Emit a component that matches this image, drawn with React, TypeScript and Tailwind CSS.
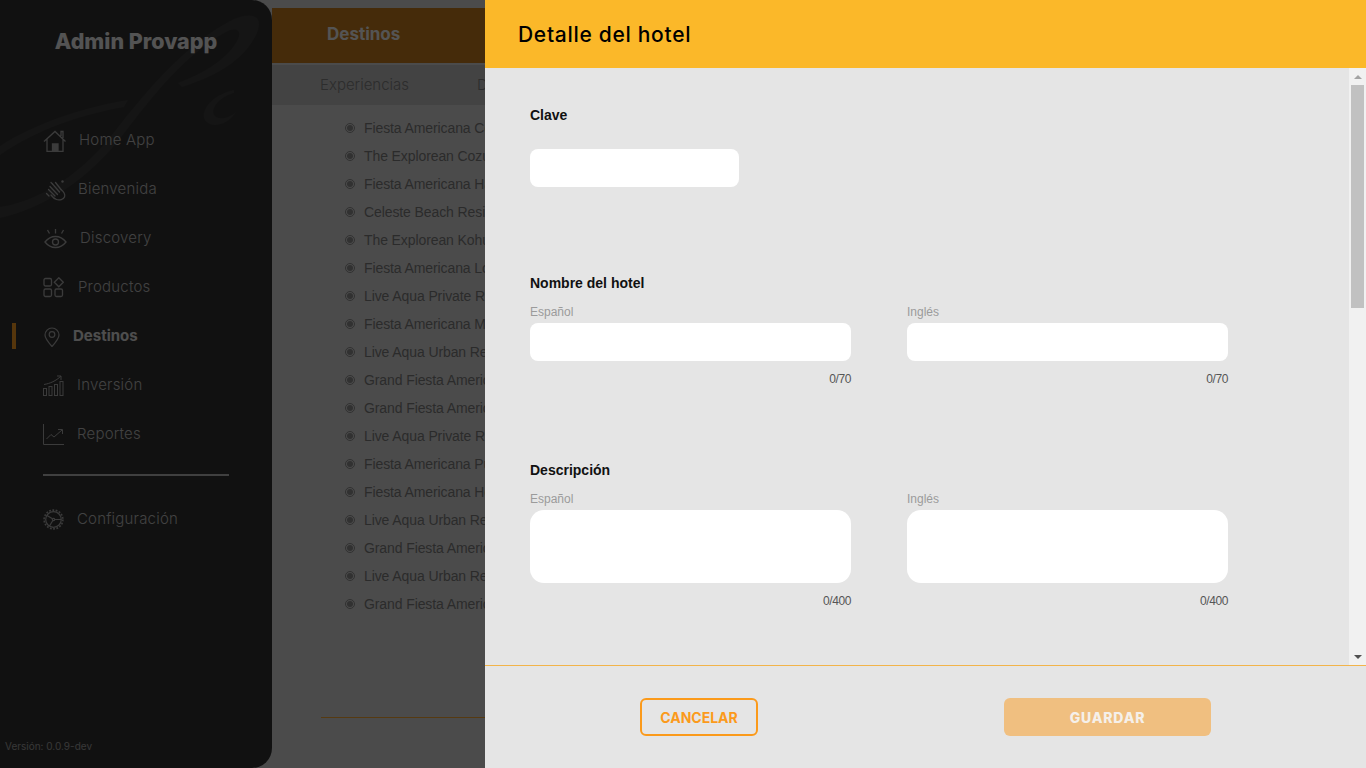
import React from 'react';

const hotels = [
  'Fiesta Americana Condesa Cancún',
  'The Explorean Cozumel',
  'Fiesta Americana Hacienda Galindo',
  'Celeste Beach Residences',
  'The Explorean Kohunlich',
  'Fiesta Americana Los Cabos',
  'Live Aqua Private Residences',
  'Fiesta Americana Mérida',
  'Live Aqua Urban Resort',
  'Grand Fiesta Americana Oaxaca',
  'Grand Fiesta Americana Puebla',
  'Live Aqua Private Residences',
  'Fiesta Americana Puerto Vallarta',
  'Fiesta Americana Hermosillo',
  'Live Aqua Urban Resort',
  'Grand Fiesta Americana Chapultepec',
  'Live Aqua Urban Resort',
  'Grand Fiesta Americana Monterrey',
];

const mont = 'font-["Inter",sans-serif]';
const arial = 'font-["Liberation_Sans",Arial,sans-serif]';

const HomeIcon = () => (
  <svg width="24" height="22" viewBox="0 0 24 22" fill="none" stroke="currentColor" strokeWidth="1.3">
    <path d="M1 11.500 12 1.500l10.500 10M4 9v12.300h16V9M18 6V1.500h2v6.500" />
    <path d="M9.500 21.500V14h5.500v7.500" fill="currentColor" />
  </svg>
);

const ClapIcon = () => (
  <svg width="22" height="22" viewBox="0 0 22 22" fill="none" stroke="currentColor" strokeWidth="1.3" strokeLinecap="round">
    <path d="M3.500 10.500 10 17M5 7.500l7.500 8M7.500 5l7 8M10.500 3.500l5.500 7" />
    <path d="M1.500 14.500 4 17M6 3.500l1.500 1.500" />
    <path d="M16 10.500c3 2.500 4.500 5 3.500 7.500s-5 3.500-8 2.500c-2-.7-4-2.500-5.500-4.500" />
    <circle cx="17.500" cy="2.500" r="1.200" fill="currentColor" stroke="none" />
  </svg>
);

const EyeIcon = () => (
  <svg width="23" height="20" viewBox="0 0 23 20" fill="none" stroke="currentColor" strokeWidth="1.3">
    <path d="M1 13c3-3.800 6-5.500 10.500-5.500S19 9.200 22 13c-3 3.800-6 5.500-10.500 5.500S4 16.800 1 13Z" />
    <circle cx="11.500" cy="13" r="3" />
    <path d="M11.500 0v4.500M3.500 1l2 3.500M19.500 1l-2 3.500" />
  </svg>
);

const GridIcon = () => (
  <svg width="21" height="21" viewBox="0 0 21 21" fill="none" stroke="currentColor" strokeWidth="1.3">
    <rect x="1" y="1.500" width="7.500" height="7.500" rx="1.500" />
    <rect x="1" y="12" width="7.500" height="7.500" rx="1.500" />
    <rect x="12" y="12" width="7.500" height="7.500" rx="1.500" />
    <path d="M15.800 0.800 20.300 5.300 15.800 9.800 11.300 5.300Z" />
  </svg>
);

const PinIcon = () => (
  <svg width="16" height="20" viewBox="0 0 16 20" fill="none" stroke="currentColor" strokeWidth="1.2">
    <path d="M8 19.500C4 15 1 11.500 1 8a7 7 0 0 1 14 0c0 3.500-3 7-7 11.500Z" />
    <circle cx="8" cy="7.500" r="2.800" />
  </svg>
);

const BarsIcon = () => (
  <svg width="21" height="21" viewBox="0 0 21 21" fill="none" stroke="currentColor" strokeWidth="1">
    <rect x="0.500" y="13.500" width="3" height="7" />
    <rect x="6" y="11.500" width="3" height="9" />
    <rect x="11.500" y="9.500" width="3" height="11" />
    <rect x="17" y="6.500" width="3" height="14" />
    <path d="M1 9.500c6-1 12-3.500 17-8.500M14 1h4v4" />
  </svg>
);

const LineIcon = () => (
  <svg width="21" height="21" viewBox="0 0 21 21" fill="none" stroke="currentColor" strokeWidth="1">
    <path d="M0.500 0v20.500H21" />
    <path d="M3.500 15 8 10.500l3 2.500 8-7M15 5.500H19.500V10" />
  </svg>
);

const GearIcon = () => (
  <svg width="21" height="21" viewBox="0 0 21 21" fill="none" stroke="currentColor" strokeWidth="1.2">
    <circle cx="10.500" cy="10.500" r="7.800" />
    <circle cx="10.500" cy="10.500" r="9.400" strokeWidth="1.600" strokeDasharray="1.800 1.500" />
    <circle cx="10.500" cy="10.500" r="1.200" />
    <path d="M9.500 9.800 4 6.500M11.800 10.500H18M9.800 11.500 6.500 17" />
  </svg>
);

const navItems = [
  { label: 'Home App', icon: <HomeIcon />, pad: 'pl-[43px]', gap: 'gap-[12px]' },
  { label: 'Bienvenida', icon: <ClapIcon />, pad: 'pl-[45px]', gap: 'gap-[11px]' },
  { label: 'Discovery', icon: <EyeIcon />, pad: 'pl-[44px]', gap: 'gap-[13px]' },
  { label: 'Productos', icon: <GridIcon />, pad: 'pl-[43px]', gap: 'gap-[14px]' },
  { label: 'Destinos', icon: <PinIcon />, pad: 'pl-[44px]', gap: 'gap-[13px]', active: true },
  { label: 'Inversión', icon: <BarsIcon />, pad: 'pl-[43px]', gap: 'gap-[13px]' },
  { label: 'Reportes', icon: <LineIcon />, pad: 'pl-[43px]', gap: 'gap-[13px]' },
];

function Sidebar() {
  return (
    <aside className="relative flex h-full w-[272px] shrink-0 flex-col overflow-hidden rounded-r-[20px] bg-[#333333] text-[#a8a8a8]">
      {/* script watermark */}
      <svg className="absolute left-0 top-0" width="272" height="220" viewBox="0 0 272 220" fill="#3d3d3d">
        <path d="M0 207c38-6 78-30 112-72 34-44 74-92 122-116 22-9 30 0 22 16-12 24-36 40-74 52l-4-4c26-10 50-24 60-44 4-9-2-12-12-7-40 22-72 62-104 104-34 44-78 72-122 82Z" />
        <path d="M0 146c34-22 80-38 128-46l-4 7c-44 8-86 22-124 48Z" />
        <path d="M234 90c-18 4-32 16-30 28 3 10 22 10 32-6 -6 6-18 9-22 3-3-8 6-18 20-22Z" />
      </svg>
      <div className={`relative h-[116px] pt-[27px] text-center text-[21.500px] font-extrabold leading-[28px] text-[#eeeeee] ${mont}`}>Admin Provapp</div>
      <nav className={`relative flex flex-col ${mont}`}>
        {navItems.map((item) => (
          <div key={item.label} className={`relative flex h-[49px] items-center ${item.pad} ${item.gap}`}>
            {item.active && <span className="absolute left-[12px] top-[11px] h-[26px] w-[4px] bg-[#f59a23]" />}
            {item.icon}
            <span className={item.active ? 'text-[15px] font-bold text-[#e0e0e0]' : 'text-[15px] font-light tracking-[0.2px] text-[#bcbcbc]'}>{item.label}</span>
          </div>
        ))}
      </nav>
      <div className="relative ml-[43px] mt-[15px] h-[2px] w-[186px] bg-[#b8b8b8]" />
      <div className={`relative mt-[19px] flex h-[49px] items-center gap-[13px] pl-[43px] ${mont}`}>
        <GearIcon />
        <span className="text-[15px] font-light tracking-[0.2px] text-[#bcbcbc]">Configuración</span>
      </div>
      <div className={`mt-auto pb-[15px] pl-[5px] text-[10px] leading-[14px] text-[#a0a0a0] ${mont}`}>Versión: 0.0.9-dev</div>
    </aside>
  );
}

function Background() {
  return (
    <main className={`flex h-full min-w-0 flex-1 flex-col pt-[8px] ${arial}`}>
      <div className="flex h-[55px] shrink-0 items-center bg-[#c57b1d] pb-[1px] pl-[55px]">
        <span className={`text-[17px] font-bold text-[#f0f0f0] ${mont}`}>Destinos</span>
      </div>
      <div className="mt-[2px] flex h-[40px] shrink-0 items-center gap-[68px] bg-[#bfbfbf] pl-[48px] pr-[20px] pt-[1px] text-[#808080]">
        <span className={`text-[15px] font-light ${mont}`}>Experiencias</span>
        <span className={`text-[15px] font-light ${mont}`}>Destinos</span>
      </div>
      <ul className="flex flex-col pl-[73px] pt-[9px]">
        {hotels.map((name, i) => (
          <li key={i} className="flex h-[28px] items-center gap-[9px] whitespace-nowrap text-[14px] tracking-[-0.1px] text-[#7c7c7c]">
            <span className="flex h-[10px] w-[10px] items-center justify-center rounded-full border border-[#8c8c8c]">
              <span className="h-[6px] w-[6px] rounded-full bg-[#8c8c8c]" />
            </span>
            {name}
          </li>
        ))}
      </ul>
      <div className="ml-[49px] mt-[99px] h-px bg-[#f7a531]" />
    </main>
  );
}

function TextBox({ label, counter, tall }: { label: string; counter: string; tall?: boolean }) {
  return (
    <div className="w-[321px]">
      <div className="h-[17px] text-[12px] leading-[17px] text-[#9b9b9b]">{label}</div>
      <div className={tall ? 'mt-[2px] h-[73px] rounded-[14px] bg-white' : 'mt-[2px] h-[38px] rounded-[8px] bg-white'} />
      <div className="mt-[11px] text-right text-[12px] leading-[14px] tracking-[-0.4px] text-[#555555]">{counter}</div>
    </div>
  );
}

function Drawer() {
  return (
    <section className={`absolute inset-y-0 right-0 flex w-[881px] flex-col bg-[#e5e5e5] ${arial}`}>
      <header className="flex h-[68px] shrink-0 items-center bg-[#fbb829] pl-[33px]">
        <h1 className={`text-[21px] font-medium leading-none tracking-[0.7px] text-black ${mont}`}>Detalle del hotel</h1>
      </header>

      <div className="flex min-h-0 flex-1">
        <div className="min-w-0 flex-1 overflow-hidden pl-[45px] pt-[39px]">
          <div className="text-[14px] font-bold leading-[17px] text-[#111111]">Clave</div>
          <div className="mt-[25px] h-[38px] w-[209px] rounded-[8px] bg-white" />

          <div className="mt-[88px] text-[14px] font-bold leading-[17px] text-[#111111]">Nombre del hotel</div>
          <div className="mt-[12px] flex gap-[56px]">
            <TextBox label="Español" counter="0/70" />
            <TextBox label="Inglés" counter="0/70" />
          </div>

          <div className="mt-[76px] text-[14px] font-bold leading-[17px] text-[#111111]">Descripción</div>
          <div className="mt-[12px] flex gap-[56px]">
            <TextBox tall label="Español" counter="0/400" />
            <TextBox tall label="Inglés" counter="0/400" />
          </div>
        </div>

        {/* scrollbar */}
        <div className="flex w-[17px] shrink-0 flex-col items-center bg-[#f1f1f1]">
          <div className="mt-[7px] h-0 w-0 border-x-[4px] border-b-[4px] border-x-transparent border-b-[#a3a3a3]" />
          <div className="mt-[6px] h-[223px] w-[13px] bg-[#c1c1c1]" />
          <div className="mb-[6px] mt-auto h-0 w-0 border-x-[4px] border-t-[4px] border-x-transparent border-t-[#505050]" />
        </div>
      </div>

      <footer className={`flex h-[103px] shrink-0 items-start border-t border-[#f2b44a] pl-[155px] pt-[32px] ${mont}`}>
        <button className="h-[38px] w-[118px] rounded-[6px] border-2 border-[#fb9a1b] pt-px text-[14px] font-bold text-[#fb9a1b]">CANCELAR</button>
        <button className="ml-[246px] h-[38px] w-[207px] rounded-[6px] bg-[#f0bf80] pt-px text-[14px] font-extrabold tracking-[0.8px] text-[#f5f0ea]">GUARDAR</button>
      </footer>
    </section>
  );
}

export default function App() {
  return (
    <div className="relative flex h-screen w-full overflow-hidden bg-[#d6d6d6]">
      <Sidebar />
      <Background />
      <div className="absolute inset-0 bg-black/65" />
      <Drawer />
    </div>
  );
}
